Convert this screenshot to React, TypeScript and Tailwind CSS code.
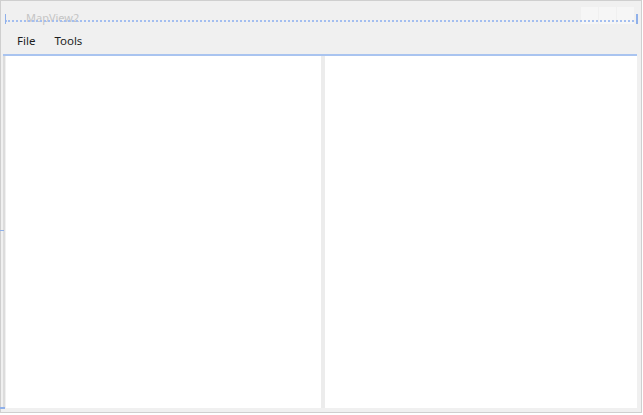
export default function App() {
  return (
    <div className="w-[643px] h-[415px] bg-white" style={{ fontFamily: '"Noto Sans", "Open Sans", sans-serif' }}>
      <div className="relative w-[642px] h-[413px] border border-[#cfcfcf] bg-[#f0f0f0] flex flex-col">
        {/* title bar */}
        <div className="relative h-[27px] flex items-start">
          <span className="ml-[25px] mt-[10px] text-[11px] leading-[14px] text-[#c4c4c4]">MapView2</span>
          <div className="ml-auto mr-[7px] mt-[6px] flex gap-[1px]">
            <div className="w-[17px] h-[17px] bg-[#f6f6f6]" />
            <div className="w-[17px] h-[17px] bg-[#f6f6f6]" />
            <div className="w-[17px] h-[17px] bg-[#f6f6f6]" />
          </div>
          {/* design-time adornment */}
          <div className="absolute left-[4px] right-[3px] top-[19px] border-t-2 border-dotted border-[#a3bef0]" />
          <div className="absolute left-[4px] top-[13px] w-[1px] h-[10px] bg-[#8fb0ea]" />
          <div className="absolute right-[3px] top-[13px] w-[2px] h-[10px] bg-[#8fb0ea]" />
        </div>
        {/* menu bar */}
        <div className="h-[26px] flex items-center gap-[19px] pl-[16px] text-[11.5px] text-[#1e1e1e]">
          <span>File</span>
          <span>Tools</span>
        </div>
        <div className="ml-[2px] mr-[4px] h-[2px] bg-[#a9c4f0]" />
        {/* content */}
        <div className="flex-1 flex ml-[2px] mr-[4px] mb-[4px] border-l-2 border-[#dcdcdc] pl-[1px] bg-[#f0f0f0]">
          <div className="w-[315px] bg-white" />
          <div className="w-[4px] bg-[#ececec]" />
          <div className="flex-1 bg-white" />
        </div>
        <div className="absolute left-[-1px] top-[229px] w-[4px] h-[1px] bg-[#8fb0ea]" />
        <div className="absolute left-[-1px] bottom-[3px] w-[5px] h-[2px] bg-[#8fb0ea]" />
      </div>
    </div>
  );
}
